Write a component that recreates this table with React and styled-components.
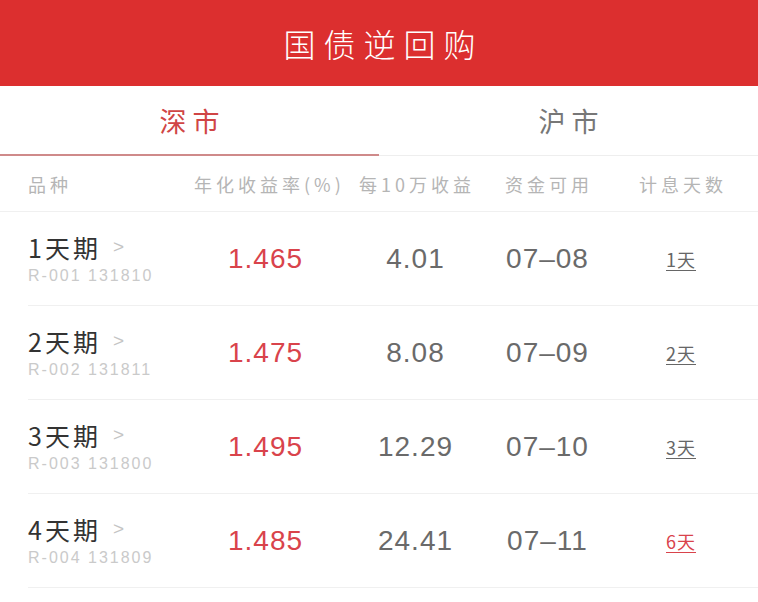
import React, { useState } from "react";
import styled, { createGlobalStyle } from "styled-components";

const GlobalStyle = createGlobalStyle`
  body {
    margin: 0;
    background: #fff;
    font-family: "Liberation Sans", "Noto Sans CJK SC", sans-serif;
  }
`

const Page = styled.div`
  width: 758px;
  min-height: 602px;
  background: #fff;
`

const Header = styled.header`
  height: 86px;
  background-color: #dc2f2f;
  color: #fff;
  display: flex;
  align-items: center;
  justify-content: center;
  padding-left: 9px;
  box-sizing: border-box;
  font-family: "Noto Sans CJK SC", sans-serif;
  font-weight: 200;
  font-size: 32px;
  letter-spacing: 8px;
`

const Tabs = styled.nav`
  display: flex;
  height: 70px;
  border-bottom: 1px solid #eeeeee;
  box-sizing: border-box;
`

const Tab = styled.div`
  position: relative;
  flex: 1;
  display: flex;
  align-items: center;
  justify-content: center;
  padding-left: 6px;
  font-family: "Noto Sans CJK SC", sans-serif;
  font-size: 27px;
  letter-spacing: 6px;
  color: ${p => (p.$active ? "#d04545" : "#777")};
  border-bottom: 2px solid ${p => (p.$active ? "#cf8a8a" : "transparent")};
  margin-bottom: -1px;
  cursor: pointer;

  & + &::before {
    content: "";
    position: absolute;
    left: 0;
    top: 20px;
    bottom: 12px;
    width: 1px;
    background: #ececec;
  }
`

const Grid = styled.div`
  display: grid;
  grid-template-columns: 190px 150px 150px 114px 1fr;
  align-items: center;
`

const HeadRow = styled(Grid)`
  height: 55px;
  border-bottom: 1px solid #f0f0f0;
  font-family: "Noto Sans CJK SC", sans-serif;
  font-size: 18px;
  letter-spacing: 4px;
  color: #b5b5b5;
`

const HeadCell = styled.div`
  text-align: ${p => (p.$left ? "left" : "center")};
  padding-left: ${p => (p.$left ? "28px" : "4px")};
  white-space: nowrap;
`

const Row = styled(Grid)`
  height: 93px;
  margin-left: 28px;
  grid-template-columns: 162px 150px 150px 114px 1fr;
  border-bottom: 1px solid #f0f0f0;
`

const Name = styled.div`
  display: flex;
  flex-direction: column;
  gap: 5px;
`

const Title = styled.div`
  display: flex;
  align-items: center;
  font-family: "Noto Sans CJK SC", sans-serif;
  font-size: 25px;
  letter-spacing: 3px;
  color: #333;
  line-height: 30px;
`

const Arrow = styled.span`
  margin-left: 12px;
  font-family: "Liberation Sans", sans-serif;
  font-size: 19px;
  color: #c4c4c4;
`

const Code = styled.div`
  font-size: 16px;
  letter-spacing: 2px;
  color: #cacaca;
`

const Value = styled.div`
  text-align: center;
  padding-left: 1px;
  font-size: 28px;
  letter-spacing: 1px;
  color: ${p => (p.$red ? "#d9434b" : "#6a6a6a")};
`

const Days = styled.div`
  text-align: center;
`

const DaysLink = styled.span`
  font-family: "Noto Sans CJK SC", sans-serif;
  font-size: 18px;
  letter-spacing: 1px;
  color: ${p => (p.$red ? "#d9434b" : "#666")};
  text-decoration: underline;
  text-decoration-thickness: 1px;
  text-underline-offset: 3px;
  cursor: pointer;
`

const rows = [
  { name: "1天期", code: "R-001 131810", rate: "1.465", gain: "4.01", date: "07–08", days: "1天" },
  { name: "2天期", code: "R-002 131811", rate: "1.475", gain: "8.08", date: "07–09", days: "2天" },
  { name: "3天期", code: "R-003 131800", rate: "1.495", gain: "12.29", date: "07–10", days: "3天" },
  { name: "4天期", code: "R-004 131809", rate: "1.485", gain: "24.41", date: "07–11", days: "6天", hot: true },
]

export default function App() {
  const [tab, setTab] = useState("sz")

  return (
    <Page>
      <GlobalStyle />
      <Header>国债逆回购</Header>
      <Tabs>
        <Tab $active={tab === "sz"} onClick={() => setTab("sz")}>深市</Tab>
        <Tab $active={tab === "sh"} onClick={() => setTab("sh")}>沪市</Tab>
      </Tabs>
      <HeadRow>
        <HeadCell $left>品种</HeadCell>
        <HeadCell>年化收益率(%)</HeadCell>
        <HeadCell>每10万收益</HeadCell>
        <HeadCell>资金可用</HeadCell>
        <HeadCell>计息天数</HeadCell>
      </HeadRow>
      {rows.map(r => (
        <Row key={r.code}>
          <Name>
            <Title>{r.name}<Arrow>&gt;</Arrow></Title>
            <Code>{r.code}</Code>
          </Name>
          <Value $red>{r.rate}</Value>
          <Value>{r.gain}</Value>
          <Value>{r.date}</Value>
          <Days><DaysLink $red={r.hot}>{r.days}</DaysLink></Days>
        </Row>
      ))}
    </Page>
  )
}
